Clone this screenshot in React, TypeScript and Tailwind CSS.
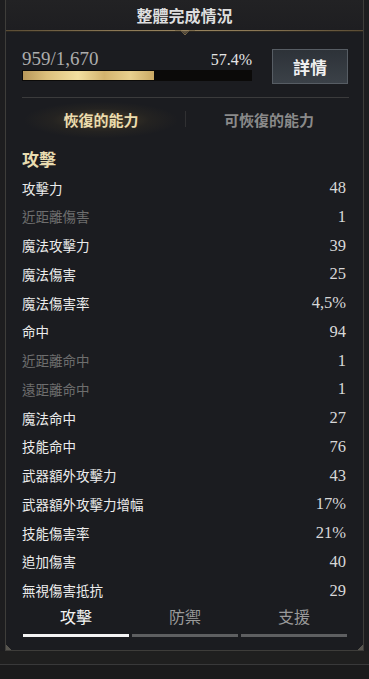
import React from "react";

const rows: { label: string; value: string; dim?: boolean }[] = [
  { label: "攻擊力", value: "48" },
  { label: "近距離傷害", value: "1", dim: true },
  { label: "魔法攻擊力", value: "39" },
  { label: "魔法傷害", value: "25" },
  { label: "魔法傷害率", value: "4,5%" },
  { label: "命中", value: "94" },
  { label: "近距離命中", value: "1", dim: true },
  { label: "遠距離命中", value: "1", dim: true },
  { label: "魔法命中", value: "27" },
  { label: "技能命中", value: "76" },
  { label: "武器額外攻擊力", value: "43" },
  { label: "武器額外攻擊力增幅", value: "17%" },
  { label: "技能傷害率", value: "21%" },
  { label: "追加傷害", value: "40" },
  { label: "無視傷害抵抗", value: "29" },
];

const cjk = "font-['Noto_Sans_CJK_TC','Noto_Sans',sans-serif]";
const serif = "font-['Liberation_Serif','Times_New_Roman',serif]";

export default function App() {
  return (
    <div className="w-[369px] h-[679px] bg-[#1d1d1f] flex flex-col overflow-hidden">
      <div className="relative mx-[5px] h-[651px] border-x border-b border-[#3e3d3a] bg-[#1b1c20] flex flex-col">
        {/* header */}
        <div className="h-[30px] flex items-center justify-center bg-[linear-gradient(180deg,#222224,#1e1e21)]">
          <span className={`${cjk} text-[16px] font-bold text-[#dedede] leading-none`}>整體完成情況</span>
        </div>
        <div className="relative">
          <div className="h-px bg-[linear-gradient(90deg,#5a4c34,#8a7755_30%,#9a8660_50%,#8a7755_70%,#5a4c34)]" />
          <div className="h-px bg-[#2c271f]" />
          <svg className="absolute left-[169px] top-[-1px]" width="20" height="8" viewBox="0 0 20 8">
            <path d="M0 1.5 L6 1.5 L10 6 L14 1.5 L20 1.5" fill="none" stroke="#7d6c4c" strokeWidth="1" />
            <path d="M7 2 L10 5 L13 2 Z" fill="#5f5340" />
          </svg>
        </div>

        {/* progress row */}
        <div className="mt-[17px] h-[35px] pl-[16px] pr-[15px] flex items-end justify-between">
          <div className="w-[230px] flex flex-col">
            <div className="flex items-baseline justify-between leading-none">
              <span className={`${serif} text-[19px] text-[#adadad]`}>959/1,670</span>
              <span className={`${serif} text-[16px] text-[#e6e6e6]`}>57.4%</span>
            </div>
            <div className="mt-[2px] mb-[3px] h-[11px] bg-[#0b0a09] p-[1px]">
              <div
                className="h-full bg-[linear-gradient(90deg,#b8985a,#dcc07c_18%,#f2dfa0_42%,#d3b36e_62%,#e9d08e_82%,#caa964)]"
                style={{ width: `${(959 / 1670) * 100}%` }}
              />
            </div>
          </div>
          <button className="w-[76px] h-[35px] border border-[#575d64] bg-[linear-gradient(180deg,#2d3238,#3b4148)] flex items-center justify-center">
            <span className={`${cjk} text-[17px] font-bold text-[#f0f0f0] leading-none`}>詳情</span>
          </button>
        </div>

        <div className="mt-[13px] ml-[16px] mr-[14px] h-px bg-[#3b3b3c]" />

        {/* sub tabs */}
        <div className="relative ml-[11px] mr-[10px] h-[42px] grid grid-cols-2">
          <div className="relative flex items-center justify-center">
            <div className="absolute left-[8px] right-[8px] top-[4px] bottom-[2px] bg-[radial-gradient(ellipse_at_center,rgba(150,125,65,0.36),rgba(90,75,40,0.14)_45%,transparent_72%)]" />
            <span className={`relative ${cjk} text-[15px] font-bold text-[#ebdcae] leading-none`}>恢復的能力</span>
          </div>
          <div className="flex items-center justify-center">
            <span className={`${cjk} text-[15px] font-bold text-[#8a8a8a] leading-none`}>可恢復的能力</span>
          </div>
          <div className="absolute left-1/2 top-[13px] h-[16px] w-px bg-[#303032]" />
        </div>

        {/* section heading */}
        <div className="h-[34px] pt-[7px] pl-[16px]">
          <span className={`${cjk} text-[17px] font-bold text-[#e8dcb0] leading-[24px] block`}>攻擊</span>
        </div>

        {/* list */}
        <div className="h-[424px] overflow-hidden pl-[16px] pr-[17px]">
          {rows.map((r) => (
            <div key={r.label} className="h-[28.75px] flex items-center justify-between">
              <span
                className={`${cjk} text-[13.5px] font-normal leading-none ${r.dim ? "text-[#6e6e6e]" : "text-[#ececec]"}`}
              >
                {r.label}
              </span>
              <span className={`${serif} text-[16.5px] leading-none text-[#d8d8d8]`}>{r.value}</span>
            </div>
          ))}
        </div>

        {/* bottom tabs */}
        <div className="ml-[17px] mr-[16px] grid grid-cols-3 gap-[3px]">
          {[
            { t: "攻擊", a: true },
            { t: "防禦", a: false },
            { t: "支援", a: false },
          ].map((tab) => (
            <div key={tab.t} className="flex flex-col">
              <div className="h-[36px] flex items-center justify-center">
                <span
                  className={`${cjk} text-[16px] font-normal leading-none ${tab.a ? "text-[#f4f4f4]" : "text-[#9a9a9a]"}`}
                >
                  {tab.t}
                </span>
              </div>
              <div className={`h-[3px] ${tab.a ? "bg-[#f4f4f4]" : "bg-[#5e5f61]"}`} />
            </div>
          ))}
        </div>

        {/* corner ornaments */}
        <div className="absolute left-0 bottom-0 w-[6px] h-[6px] bg-[linear-gradient(45deg,#57554f_50%,transparent_50%)]" />
        <div className="absolute right-0 bottom-0 w-[6px] h-[6px] bg-[linear-gradient(-45deg,#57554f_50%,transparent_50%)]" />
      </div>
      <div className="h-[13px] bg-[#1f1f1f]" />
      <div className="h-px bg-[#39393a]" />
      <div className="flex-1 bg-[#1b1b1c]" />
    </div>
  );
}
